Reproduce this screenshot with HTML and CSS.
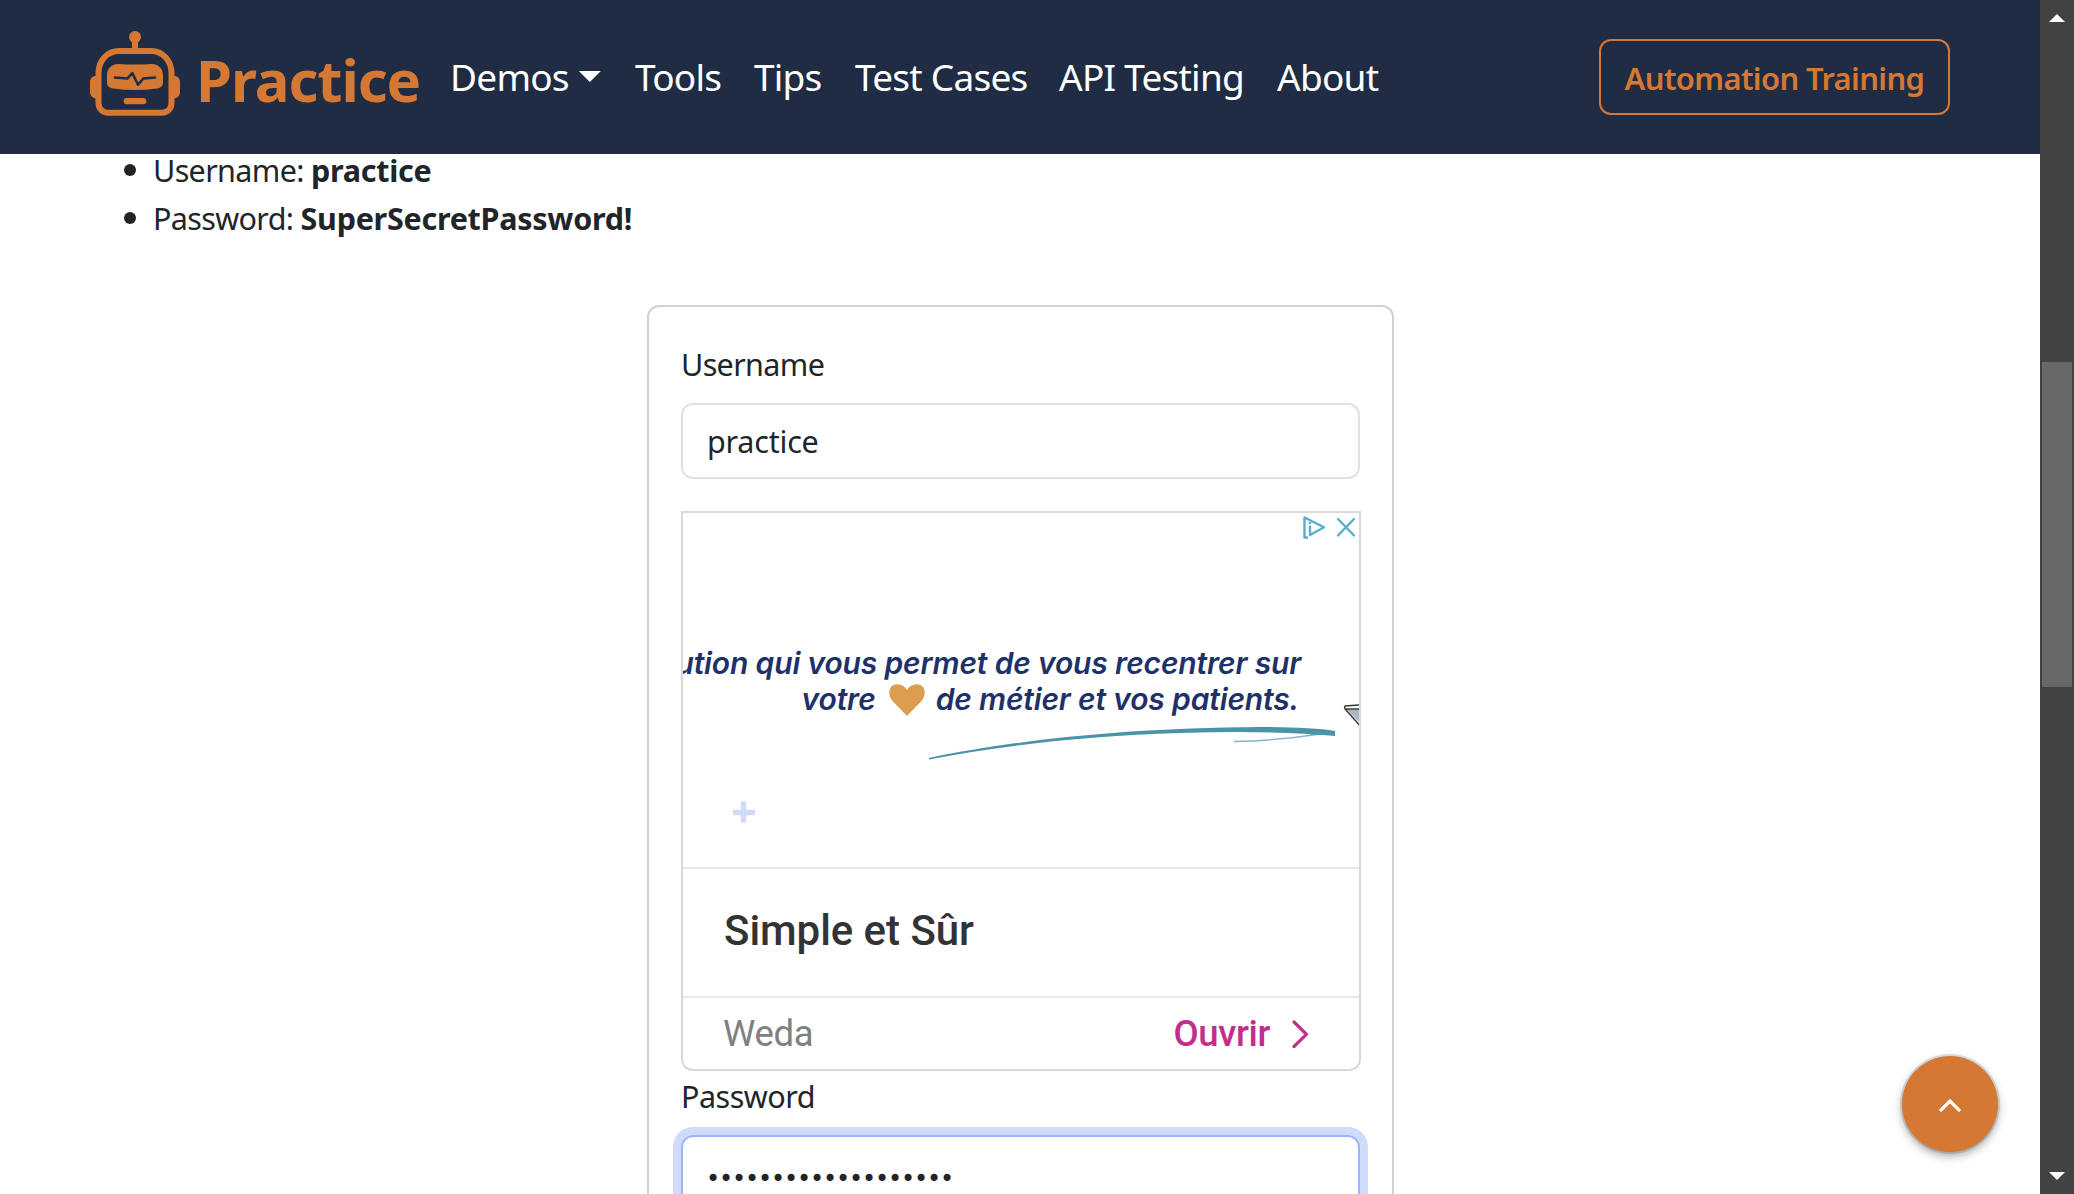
FILE: index.html
```
<!DOCTYPE html>
<html lang="en">
<head>
<meta charset="utf-8">
<title>Practice - Login</title>
<link rel="stylesheet" href="styles.css">
</head>
<body>
<div class="page">
  <header class="navbar">
    <a class="brand">
      <svg class="brand-logo" viewBox="0 0 90 86" fill="none">
        <circle cx="45" cy="6" r="6" fill="#d47833"/>
        <path d="M45 8V18" stroke="#d47833" stroke-width="6"/>
        <path d="M29 20H61C73 20 81.500 30 81.500 42V72C81.500 78 77 81.700 72 81.700H18C13 81.700 8.500 78 8.500 72V42C8.500 30 17 20 29 20Z" stroke="#d47833" stroke-width="6"/>
        <path d="M6 44.700C2 45 0 48 0 51V61C0 64 2 67 6 67.500ZM84 44.700C88 45 90 48 90 51V61C90 64 88 67 84 67.500Z" fill="#d47833"/>
        <path d="M28 33Q45 34 62 33C69 33.500 73 38 73 44V51C73 55 71 57 67 57.500Q45 60.500 23 57.500C19 57 17 55 17 51V44C17 38 21 33.500 28 33Z" fill="#d47833"/>
        <path d="M25 46.500L37.300 47.600L42.300 42L48 53.800L53.300 47.600L65 46.500" stroke="#202b44" stroke-width="2.500" stroke-linecap="round" stroke-linejoin="round"/>
        <rect x="33.700" y="67" width="22.600" height="6.200" rx="3" fill="#d47833"/>
      </svg>
      <span class="brand-name">Practice</span>
    </a>
    <nav class="nav-links">
      <a class="dropdown">Demos<span class="caret"></span></a>
      <a>Tools</a>
      <a>Tips</a>
      <a>Test Cases</a>
      <a>API Testing</a>
      <a>About</a>
    </nav>
    <a class="btn-training">Automation Training</a>
  </header>
  <main>
    <ul class="credentials">
      <li><span>Username: <b>practice</b></span></li>
      <li><span>Password: <b>SuperSecretPassword!</b></span></li>
    </ul>
    <form class="login">
      <label>Username</label>
      <div class="field username">practice</div>
      <section class="ad">
        <div class="ad-hero">
          <p class="ad-line">solution qui vous permet de vous recentrer sur</p>
          <p class="ad-line second"><span>votre</span>
            <svg class="heart" viewBox="0 0 36 32"><path d="M18 32L3.500 17C-1.500 11-.500 3 5 .800C10-1 15 1 18 6C21 1 26-1 31 .800C36.500 3 37.500 11 32.500 17Z" fill="#dd9c50"/></svg>
            <span>de métier et vos patients.</span></p>
          <svg class="ad-art" viewBox="683 513 676 354">
            <path d="M929 758C1010 741 1120 728 1260 727Q1310 727 1335 731V736Q1270 730 1180 733C1090 736 1010 744 929 759.500Z" fill="#4b93a8"/>
            <path d="M1234 741.500Q1275 741 1320 734" stroke="#7fb7c7" stroke-width="1.500" fill="none"/>
            <path d="M1308 735L1335 731.500V735Z" fill="#4b93a8"/>
            <path d="M743.500 801.500V822.500M733 812.500H755" stroke="#d1dafb" stroke-width="5.500" fill="none"/>
            <path d="M1346 709L1365 728V710Z" fill="#a9b6c4"/>
            <path d="M1365 704.500L1345 706Q1344 708 1345.500 709.500L1362 728M1346 709H1365" stroke="#3a3a3a" stroke-width="1.500" fill="none"/>
          </svg>
          <svg class="ad-choices" viewBox="0 0 56 26" fill="none" stroke="#5eaccb">
            <path d="M7 22.500H3.500V2.500L23 12.300L9 20V10.500M9 7V9" stroke-width="2.400" stroke-linejoin="round"/>
            <path d="M37 4L53 20.500M53 4L37 20.500" stroke-width="2.400" stroke-linecap="round"/>
          </svg>
        </div>
        <h2 class="ad-title">Simple et Sûr</h2>
        <div class="ad-footer">
          <span class="ad-brand">Weda</span>
          <span class="ad-open">Ouvrir</span>
          <svg class="ad-chevron" viewBox="0 0 16 28"><path d="M2 2L14.500 14.300L2 26.500" fill="none" stroke="#c22e8b" stroke-width="3.200" stroke-linecap="round"/></svg>
        </div>
      </section>
      <label class="password-label">Password</label>
      <div class="field password">•••••••••••••••••••</div>
    </form>
  </main>
</div>
<aside class="scrollbar">
  <svg viewBox="0 0 16 8"><path d="M8 0L16 8H0Z" fill="#fff"/></svg>
  <div class="thumb"></div>
  <svg class="down" viewBox="0 0 16 8"><path d="M0 0H16L8 8Z" fill="#fff"/></svg>
</aside>
<a class="to-top"><svg viewBox="0 0 22 13"><path d="M1 12L11 2L21 12" fill="none" stroke="#fff" stroke-width="3.200"/></svg></a>
</body>
</html>
```
FILE: styles.css
```
* { box-sizing: border-box; }
body {
  margin: 0;
  height: 1194px;
  display: flex;
  overflow: hidden;
  background: #fff;
  color: #212529;
  font: 30.5px/48px "Noto Sans", sans-serif;
  letter-spacing: -0.65px;
}
.page { width: 2040px; height: 1194px; overflow: hidden; }
svg { display: block; flex: none; }

.navbar {
  position: relative;
  z-index: 1;
  height: 154px;
  padding: 0 90px;
  display: flex;
  align-items: center;
  background: #202b44;
}
.brand { display: flex; align-items: center; gap: 16px; width: 360px; }
.brand-logo { width: 90px; height: 86px; margin-bottom: 6px; }
.brand-name {
  padding-top: 5px;
  color: #d47833;
  font-size: 58px;
  font-weight: 700;
  letter-spacing: -1.05px;
}
.nav-links {
  flex: 1;
  display: grid;
  grid-template-columns: 185px 119px 101px 204px 218px auto;
  color: #fff;
  font-size: 37px;
  letter-spacing: -0.75px;
  white-space: nowrap;
}
.dropdown { display: flex; }
.caret {
  width: 22px;
  height: 11px;
  margin: 18px 0 0 10px;
  background: #fff;
  clip-path: polygon(0 0, 100% 0, 50% 100%);
}
.btn-training {
  width: 351px;
  height: 76px;
  padding-top: 13px;
  border: 2px solid #d47833;
  border-radius: 12px;
  color: #d47833;
  font-size: 31px;
  font-weight: 600;
  text-align: center;
}

.credentials { margin: -8px 0 63px; padding: 0 0 0 124px; list-style: none; }
.credentials li { display: flex; align-items: center; gap: 17px; }
.credentials li::before {
  content: "";
  width: 12px;
  height: 12px;
  border-radius: 50%;
  background: #212529;
}
.credentials b { letter-spacing: -0.27px; }

.login {
  width: 747px;
  height: 1000px;
  margin-left: 647px;
  padding: 33px 32px 0;
  border: 2px solid #d1d1d1;
  border-radius: 12px;
}
label { display: block; margin-bottom: 15px; }
.field {
  width: 679px;
  height: 76px;
  padding: 12px 24px;
  border: 2px solid #dee2e6;
  border-radius: 12px;
}
.username { margin-bottom: 32px; letter-spacing: -0.2px; }
.password-label { margin-top: 1px; letter-spacing: -0.5px; }
.password {
  padding-left: 23px;
  border-color: #9ab6fa;
  box-shadow: 0 0 0 8px #d0dbfc;
  font: 24px/60px "DejaVu Sans", sans-serif;
  letter-spacing: -1.16px;
}

.ad {
  width: 680px;
  height: 560px;
  border: 2px solid #d9d9d9;
  border-radius: 0 0 12px 12px;
}
.ad-hero {
  position: relative;
  height: 356px;
  padding: 132px 58px 0 0;
  border-bottom: 2px solid #e8e8e8;
  overflow: hidden;
}
.ad-line {
  display: flex;
  justify-content: flex-end;
  margin: 0;
  color: #20316a;
  font: italic 600 30px/36px Inter, sans-serif;
  letter-spacing: -0.15px;
  white-space: nowrap;
}
.second { padding-right: 2px; }
.heart { width: 36px; height: 32px; margin: 3px 11px 0 13px; }
.ad-art { position: absolute; left: 0; top: 0; width: 676px; height: 354px; }
.ad-choices { position: absolute; right: 2px; top: 2px; width: 56px; height: 26px; }
.ad-title {
  height: 129px;
  margin: 0;
  padding: 37px 41px 0;
  border-bottom: 2px solid #e8e8e8;
  color: #333;
  font: 500 42px/50px Roboto, sans-serif;
  letter-spacing: -0.05px;
}
.ad-footer {
  display: flex;
  align-items: center;
  height: 71px;
  padding: 0 51px 0 40px;
  font: 400 36.5px/44px Roboto, sans-serif;
  letter-spacing: -0.35px;
}
.ad-brand { flex: 1; color: #808080; }
.ad-open { color: #c22e8b; font-weight: 500; }
.ad-chevron { width: 16px; height: 28px; margin-left: 22px; }

.scrollbar {
  width: 34px;
  height: 1194px;
  padding: 14px 2px;
  display: flex;
  flex-direction: column;
  align-items: center;
  background: #424242;
}
.scrollbar svg { width: 16px; height: 8px; margin-right: 0; }
.thumb { width: 30px; height: 325px; margin-top: 340px; background: #686868; }
.scrollbar .down { margin-top: auto; }

.to-top {
  position: fixed;
  left: 1902px;
  top: 1056px;
  width: 96px;
  height: 96px;
  display: flex;
  align-items: center;
  justify-content: center;
  border-radius: 50%;
  background: #d47833;
  box-shadow: 0 0 0 2px rgba(0, 0, 0, 0.12), 0 4px 10px rgba(0, 0, 0, 0.35);
}
.to-top svg { width: 22px; height: 13px; margin-top: 3px; }
```
